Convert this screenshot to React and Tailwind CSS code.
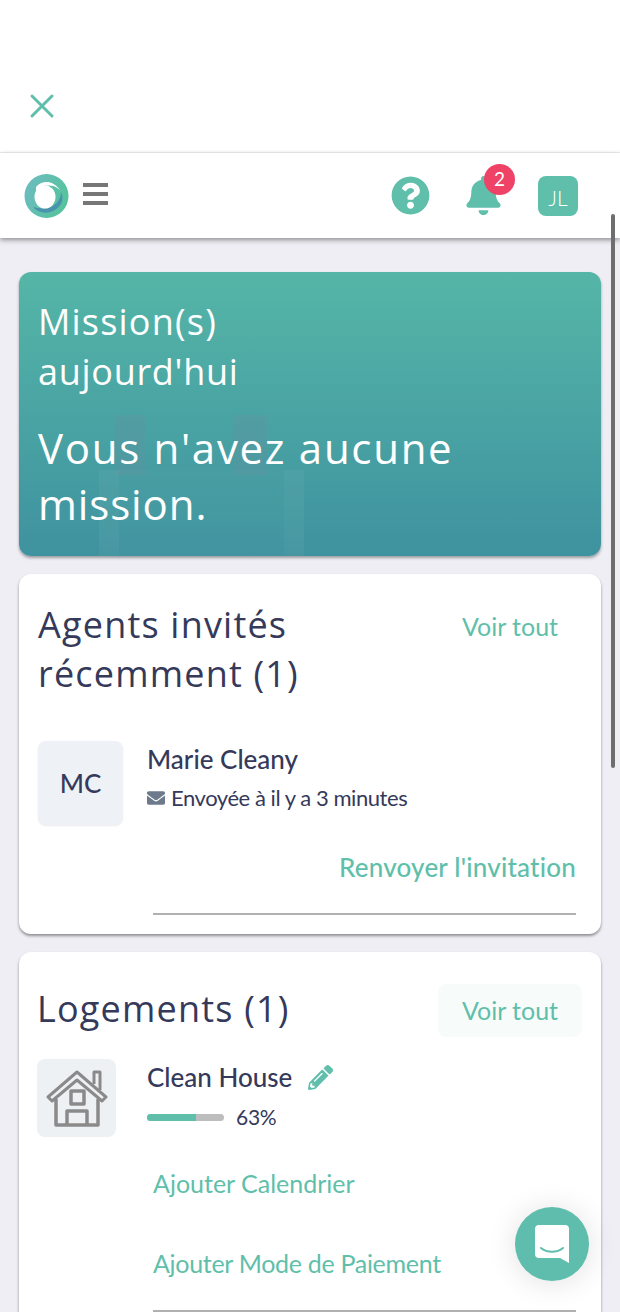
import { FaQuestionCircle, FaBell, FaEnvelope, FaPencilAlt } from "react-icons/fa";

function Logo() {
  return (
    <svg width="45" height="44" viewBox="0 0 45 44">
      <defs>
        <linearGradient id="ring" x1="0" y1="0.2" x2="1" y2="0.6">
          <stop offset="0" stopColor="#6dbcbf" />
          <stop offset="1" stopColor="#55c39c" />
        </linearGradient>
      </defs>
      <circle cx="22.5" cy="22" r="22" fill="url(#ring)" />
      <path d="M9 33C16 41 30 41 37 30C39 26 39 22 37 18C37 26 31 33 23 34C18 35 13 34 9 33Z" fill="#4a93ad" />
      <ellipse cx="21" cy="23" rx="10.5" ry="11.5" fill="#fff" />
      <path d="M12 13C18 6 29 6 36 16C29 10 20 10 12 17Z" fill="#fff" />
    </svg>
  );
}

function HouseIcon() {
  return (
    <svg width="62" height="64" viewBox="0 0 62 62" fill="none" stroke="#8a8a8a" strokeWidth="3.5" strokeLinejoin="round">
      <path d="M2 30 L31 5 L60 30 L56 34 L31 13 L6 34 Z" strokeWidth="3" />
      <path d="M48 17 V5 H54 V23" strokeWidth="3" />
      <path d="M10 32 V58 H52 V32" />
      <rect x="25" y="24" width="13" height="13" />
      <path d="M21 58 V44 H41 V58" />
    </svg>
  );
}

function ChatIcon() {
  return (
    <svg width="36" height="40" viewBox="0 0 36 40">
      <path d="M5 1H31A4 4 0 0 1 35 5V39L26 34H5A4 4 0 0 1 1 30V5A4 4 0 0 1 5 1Z" fill="#fff" />
      <path d="M7 24C13 29 23 29 29 24" fill="none" stroke="#5fbdae" strokeWidth="2" strokeLinecap="round" />
    </svg>
  );
}

function CardTitle({ children }) {
  return <h2 className="font-['Open_Sans',sans-serif] text-[36px] leading-[49px] tracking-[1.2px] text-[#35395a]">{children}</h2>;
}

function VoirTout({ tinted }) {
  return (
    <button className={`w-[144px] h-[53px] rounded-lg text-[25px] text-[#5fbfaa] ${tinted ? "bg-[#f7fcfb]" : ""}`}>
      Voir tout
    </button>
  );
}

export default function App() {
  return (
    <div className="relative h-[1312px] w-[620px] overflow-hidden bg-[#eeeef4] font-[Lato,sans-serif] [font-variant-ligatures:none]">
      {/* close bar */}
      <div className="h-[153px] bg-white border-b border-[#f0f0f0] pt-[93px] pl-[29px]">
        <svg width="26" height="26" viewBox="0 0 26 26" stroke="#5fbfaa" strokeWidth="3" strokeLinecap="round">
          <path d="M3 3L23 23M23 3L3 23" />
        </svg>
      </div>

      {/* header */}
      <div className="relative flex h-[85px] items-center bg-white pl-[24px] pr-[42px] shadow-[0_2px_5px_rgba(0,0,0,0.4)]">
        <Logo />
        <div className="ml-[14px] mb-[3px] flex w-[25px] flex-col gap-[5px]">
          <div className="h-[4px] bg-[#777]" />
          <div className="h-[4px] bg-[#777]" />
          <div className="h-[4px] bg-[#777]" />
        </div>
        <FaQuestionCircle className="ml-auto text-[39px] text-[#5fbfaa]" />
        <div className="relative ml-[34px]">
          <FaBell className="text-[39px] text-[#5fbfaa]" />
          <span className="absolute -right-[12px] -top-[12px] flex h-[31px] w-[31px] items-center justify-center rounded-full bg-[#ee4266] text-[19px] text-white">
            2
          </span>
        </div>
        <div className="ml-[35px] flex h-[40px] w-[40px] items-center justify-center rounded-lg bg-[#5fbfaa] pt-[4px] text-[21px] font-light text-white">
          JL
        </div>
      </div>

      <div className="flex flex-col gap-[18px] px-[19px] pt-[34px]">
        {/* missions */}
        <section className="relative h-[284px] overflow-hidden rounded-xl bg-gradient-to-b from-[#55b6a7] to-[#3f929f] px-[19px] pt-[25px] font-['Open_Sans',sans-serif] text-white shadow-[0_2px_3px_rgba(0,0,0,0.35)]">
          <svg className="absolute left-[60px] top-[143px]" width="250" height="141" viewBox="0 0 250 141">
            <rect x="36" y="0" width="30" height="60" fill="#6c8ba0" opacity="0.25" />
            <rect x="154" y="0" width="34" height="60" fill="#6c8ba0" opacity="0.25" />
            <rect x="20" y="55" width="205" height="86" fill="#fff" opacity="0.02" />
            <rect x="20" y="55" width="20" height="86" fill="#fff" opacity="0.03" />
            <rect x="205" y="55" width="20" height="86" fill="#fff" opacity="0.03" />
          </svg>
          <div className="relative">
            <p className="text-[36px] leading-[50px] tracking-[1.2px]">Mission(s)</p>
            <p className="text-[36px] leading-[50px] tracking-[0.7px]">aujourd'hui</p>
            <p className="mt-[23px] text-[42px] leading-[56px] tracking-[1.7px]">Vous n'avez aucune</p>
            <p className="text-[42px] leading-[56px] tracking-[0.9px]">mission.</p>
          </div>
        </section>

        {/* agents */}
        <section className="h-[360px] rounded-xl bg-white pl-[19px] pr-[25px] pt-[26px] shadow-[0_2px_3px_rgba(0,0,0,0.4)]">
          <div className="flex items-start justify-between">
            <CardTitle>
              Agents invités
              <br />
              récemment (1)
            </CardTitle>
            <div className="-mr-[6px]">
              <VoirTout />
            </div>
          </div>
          <div className="mt-[43px] flex">
            <div className="flex h-[84px] w-[85px] items-center justify-center rounded-lg bg-[#eef1f5] text-[26px] font-medium text-[#35395a] shadow-[0_1px_2px_rgba(0,0,0,0.08)]">
              MC
            </div>
            <div className="ml-[24px]">
              <p className="text-[26px] leading-[37px] font-medium text-[#35395a]">Marie Cleany</p>
              <p className="mt-[3px] flex items-center text-[22px] tracking-[-0.45px] text-[#35395a]">
                <FaEnvelope className="mr-[6px] text-[18px] text-[#6c7a8c]" />
                Envoyée à il y a 3 minutes
              </p>
            </div>
          </div>
          <p className="mt-[24px] text-right text-[26px] leading-[36px] font-medium tracking-[0.2px] text-[#5fbfaa]">Renvoyer l'invitation</p>
          <div className="ml-[115px] mt-[28px] border-t-2 border-[#b0b0b0]" />
        </section>

        {/* logements */}
        <section className="h-[400px] rounded-xl bg-white pl-[18px] pr-[25px] pt-[32px] shadow-[0_2px_3px_rgba(0,0,0,0.4)]">
          <div className="flex items-center justify-between">
            <div className="mb-[4px]">
              <CardTitle>Logements (1)</CardTitle>
            </div>
            <div className="-mr-[6px]">
              <VoirTout tinted />
            </div>
          </div>
          <div className="mt-[22px] flex">
            <div className="flex h-[78px] w-[79px] items-center justify-center rounded-lg bg-[#eef1f4]">
              <HouseIcon />
            </div>
            <div className="ml-[31px]">
              <div className="flex items-center">
                <p className="text-[26px] leading-[37px] font-medium text-[#35395a]">Clean House</p>
                <FaPencilAlt className="ml-[16px] text-[25px] text-[#5fbfaa]" />
              </div>
              <div className="mt-[6px] flex items-center">
                <div className="h-[7px] w-[77px] overflow-hidden rounded-full bg-[#bdbdbd]">
                  <div className="h-full w-[63%] bg-[#5fbfaa]" />
                </div>
                <span className="ml-[12px] text-[21px] leading-[30px] tracking-[-0.3px] text-[#35395a]">63%</span>
              </div>
            </div>
          </div>
          <p className="ml-[116px] mt-[30px] text-[25px] leading-[33px] text-[#5fbfaa]">Ajouter Calendrier</p>
          <p className="ml-[116px] mt-[47px] text-[25px] leading-[33px] tracking-[-0.3px] text-[#5fbfaa]">Ajouter Mode de Paiement</p>
          <div className="ml-[116px] mt-[30px] border-t-2 border-[#b0b0b0]" />
        </section>
      </div>

      {/* scrollbar */}
      <div className="absolute left-[611px] top-[214px] h-[554px] w-[4px] rounded-full bg-[#6e6e6e]" />

      {/* chat */}
      <button className="absolute left-[515px] top-[1207px] flex h-[74px] w-[74px] items-center justify-center rounded-full bg-[#5fbdae] shadow-[0_2px_30px_rgba(0,0,0,0.12)]">
        <ChatIcon />
      </button>
    </div>
  );
}
